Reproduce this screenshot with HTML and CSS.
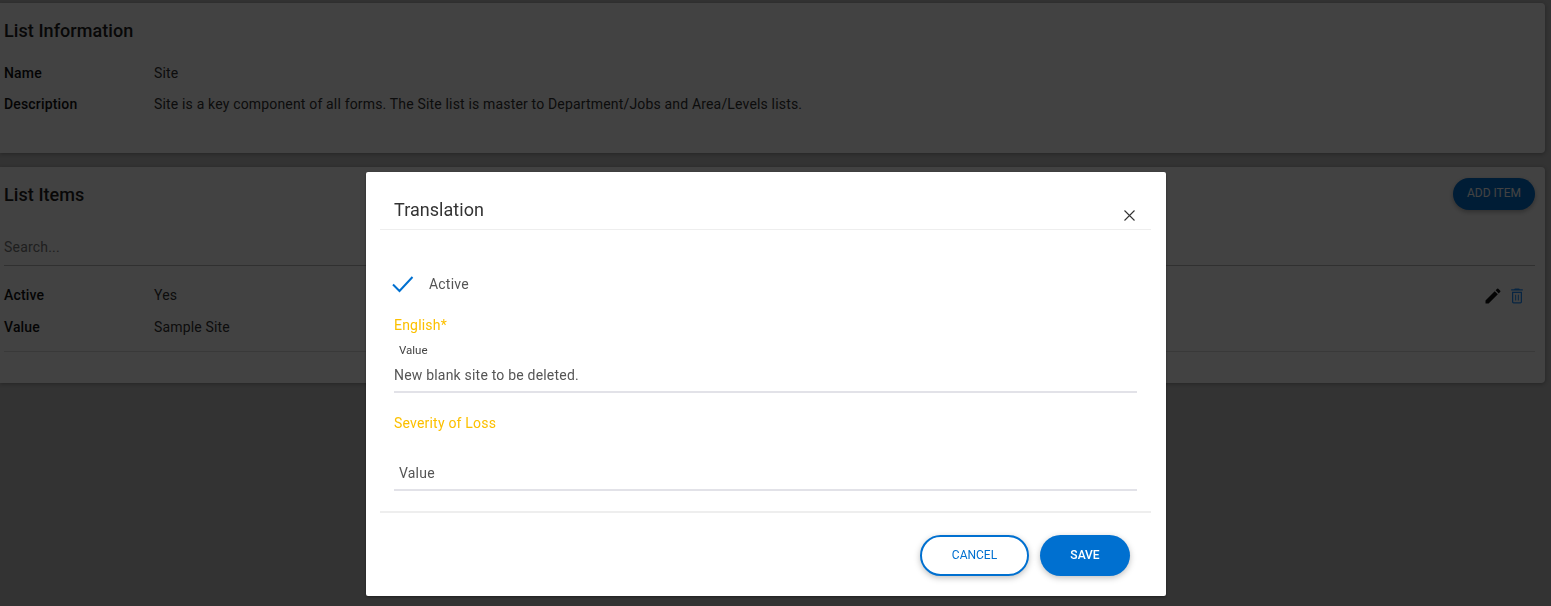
FILE: index.html
```html
<!DOCTYPE html>
<html lang="en">
<head>
<meta charset="utf-8">
<title>List Information</title>
<link rel="stylesheet" href="styles.css">
</head>
<body>
<main class="page">
  <section class="card info-card">
    <h2 class="card-title">List Information</h2>
    <dl class="fields info-fields">
      <dt>Name</dt><dd>Site</dd>
      <dt>Description</dt><dd>Site is a key component of all forms. The Site list is master to Department/Jobs and Area/Levels lists.</dd>
    </dl>
  </section>
  <section class="card items-card">
    <header class="items-head">
      <h2 class="card-title">List Items</h2>
      <button class="add-btn" type="button">ADD ITEM</button>
    </header>
    <div class="search">Search...</div>
    <div class="item">
      <dl class="fields item-fields">
        <dt>Active</dt><dd>Yes</dd>
        <dt>Value</dt><dd>Sample Site</dd>
      </dl>
      <div class="item-actions">
        <svg class="icon" width="20" height="20" viewBox="0 0 24 24"><path fill="#111" d="M3 17.25V21h3.75L17.81 9.94l-3.75-3.75L3 17.25zM20.71 7.04a1 1 0 0 0 0-1.41l-2.34-2.34a1 1 0 0 0-1.41 0l-1.83 1.83 3.75 3.75 1.83-1.83z"/></svg>
        <svg class="icon" width="20" height="20" viewBox="0 0 24 24"><path fill="#1f90ff" d="M6 19c0 1.1.9 2 2 2h8c1.100 0 2-.9 2-2V7H6v12zM7.500 8.500h9V19c0 .3-.2.5-.5.500H8c-.3 0-.5-.2-.5-.5V8.500zM15.500 4l-1-1h-5l-1 1H5v1.500h14V4z"/><path fill="#1f90ff" d="M9.800 10.500h1.200v7H9.800zM13 10.500h1.200v7H13z"/></svg>
      </div>
    </div>
  </section>
</main>
<div class="overlay">
  <div class="modal">
    <header class="modal-head">
      <h3 class="modal-title">Translation</h3>
      <svg class="close" width="11" height="11" viewBox="0 0 11 11"><path d="M.5.5l10 10M10.500.5l-10 10" stroke="#333" stroke-width="1.1" fill="none"/></svg>
    </header>
    <div class="modal-body">
      <div class="check-row">
        <svg class="check" width="22" height="17" viewBox="0 0 22 17"><path d="M1 8.500l6.500 6.500L20.500 1" stroke="#0070d0" stroke-width="2" fill="none"/></svg>
        <span>Active</span>
      </div>
      <div class="group-label english">English*</div>
      <div class="mini-label">Value</div>
      <div class="input filled">New blank site to be deleted.</div>
      <div class="group-label severity">Severity of Loss</div>
      <div class="input value-input">Value</div>
    </div>
    <footer class="modal-foot">
      <button class="btn btn-outline" type="button">CANCEL</button>
      <button class="btn btn-solid" type="button">SAVE</button>
    </footer>
  </div>
</div>
</body>
</html>
```
FILE: styles.css
```css
* { box-sizing: border-box; }
html, body { margin: 0; height: 100%; }
body {
  background: #c4c4c4;
  font-family: Roboto, "Liberation Sans", sans-serif;
  color: #222;
  overflow: hidden;
}
.page { padding: 3px 6px 0 0; display: flex; flex-direction: column; gap: 14px; }
.card {
  background: #fff;
  border-radius: 0 4px 4px 0;
  box-shadow: 0 1px 4px rgba(0,0,0,.3);
}
.info-card { height: 150px; padding: 16px 4px 0; }
.items-card { height: 216px; padding: 12px 10px 0 4px; }
.card-title { margin: 0; font-size: 18px; line-height: 24px; font-weight: 500; color: #222; letter-spacing: .07px; }
.fields {
  display: grid;
  grid-template-columns: 150px 1fr;
  align-content: start;
  margin: 0;
  font-size: 14px;
  line-height: 20px;
  letter-spacing: .17px;
}
.fields dt { font-weight: 500; color: #111; }
.fields dd { margin: 0; color: #333; }
.info-fields { margin-top: 20px; row-gap: 11px; }
.items-head { display: flex; justify-content: space-between; align-items: flex-start; height: 34px; }
.items-head .card-title { margin-top: 4px; }
.add-btn {
  width: 82px; height: 32px;
  border: 0; border-radius: 16px;
  background: #0070d0; color: #fff;
  font: 400 12px Roboto, sans-serif;
  box-shadow: 0 2px 5px rgba(0,0,0,.3);
  margin-top: -1px;
  padding-bottom: 4px;
}
.search {
  margin-top: 24px;
  height: 29px;
  border-bottom: 1px solid #bbb;
  font-size: 14px; line-height: 20px;
  letter-spacing: .2px;
  color: #777;
}
.item {
  display: flex; justify-content: space-between;
  height: 86px;
  border-bottom: 1px solid #ddd;
  padding-top: 19px;
}
.item-fields { row-gap: 12px; flex: 1; }
.item-actions { display: flex; gap: 4.500px; padding: 1px 8px 0 0; }
.icon { display: block; }
.overlay {
  position: fixed; inset: 0;
  background: rgba(0,0,0,.74);
  padding: 172px 0 0 366px;
}
.modal {
  width: 800px; height: 424px;
  background: #fff;
  border-radius: 2px;
  padding: 0 15px 0 14px;
  box-shadow: 0 1px 3px rgba(0,0,0,.4);
  display: flex; flex-direction: column;
}
.modal-head {
  height: 58px;
  border-bottom: 1px solid #eee;
  display: flex; justify-content: space-between;
  padding: 26px 16px 0 14px;
}
.modal-title { margin: 0; font-size: 18px; line-height: 24px; font-weight: 400; color: #333; letter-spacing: .05px; }
.close { margin-top: 12px; }
.modal-body { flex: 1; padding: 0 14px; border-bottom: 2px solid #eee; }
.check-row {
  display: flex; align-items: center;
  margin: 44px 0 0 -2px;
  height: 20px;
  font-size: 14px; letter-spacing: .2px; color: #555;
}
.check { margin-right: 15px; }
.group-label { font-size: 14px; line-height: 20px; font-weight: 400; color: #fcc000; letter-spacing: .2px; }
.english { margin-top: 21px; }
.mini-label { font-size: 11.500px; line-height: 16px; color: #444; padding-left: 5px; margin-top: 7px; }
.input {
  border-bottom: 2px solid #e2e2e8;
  font-size: 14px; line-height: 20px; letter-spacing: .2px; color: #555;
}
.filled { margin-top: 7px; height: 28px; }
.severity { margin-top: 20px; }
.value-input { margin-top: 30px; height: 28px; padding-left: 5px; }
.modal-foot {
  display: flex; justify-content: flex-end; gap: 11px;
  padding: 22px 21px 0 0;
  height: 83px;
}
.btn {
  height: 41px; border-radius: 21px;
  font: 500 12px Roboto, sans-serif;
  box-shadow: 0 2px 6px rgba(0,0,0,.25);
  padding-bottom: 2px;
}
.btn-outline { width: 109px; background: #fff; color: #0070d0; border: 2px solid #0070d0; font-weight: 400; }
.btn-solid { width: 90px; background: #0070d0; color: #fff; border: 0; }
```
